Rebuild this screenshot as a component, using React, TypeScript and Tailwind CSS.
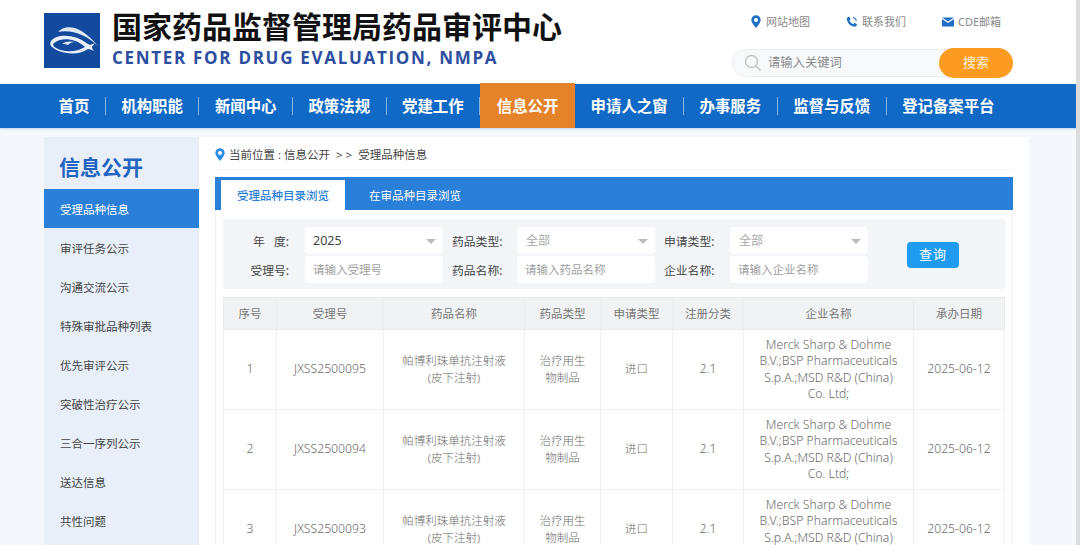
import React from "react";

const cjk = "font-['Noto_Sans','Noto_Sans_CJK_SC',sans-serif]";
const navItems = ["首页", "机构职能", "新闻中心", "政策法规", "党建工作", "信息公开", "申请人之窗", "办事服务", "监督与反馈", "登记备案平台"];
const sideItems = ["受理品种信息", "审评任务公示", "沟通交流公示", "特殊审批品种列表", "优先审评公示", "突破性治疗公示", "三合一序列公示", "送达信息", "共性问题"];
const rows = [
  ["1", "JXSS2500095"],
  ["2", "JXSS2500094"],
  ["3", "JXSS2500093"],
];
const heads = ["序号", "受理号", "药品名称", "药品类型", "申请类型", "注册分类", "企业名称", "承办日期"];
const widths = [53, 107, 141, 76, 72, 71, 170, 91];

function Pin({ className }: { className: string }) {
  return (
    <svg viewBox="0 0 12 15" className={className}>
      <path fillRule="evenodd" d="M6 0a5.6 5.6 0 0 0-5.6 5.6C.4 9.4 6 15 6 15s5.6-5.6 5.6-9.4A5.6 5.6 0 0 0 6 0Zm0 3.2a2.4 2.4 0 1 1 0 4.8 2.4 2.4 0 0 1 0-4.8Z" fill="currentColor" />
    </svg>
  );
}

function Logo() {
  return (
    <svg viewBox="0 0 56 55" className="w-14 h-[55px] shrink-0 bg-[#134a9e]">
      <path d="M14 19C22 10 38 13 54 33 43 22 27 16 14 19Z" fill="#dfe9f6" />
      <path fillRule="evenodd" d="M7 28C13 20 32 21 44 31c2 1.500 5 0 7-1-1 2-3 3-3 4 0 1 1 3 2 4-2-1-4-2-6-2C33 44 13 40 7 33c-1-2-1-3 0-5Zm3 2c-2 2 0 4 2 5 9 5 21 4 29-1C30 24 16 25 10 30Z" fill="#e8eff8" />
      <path d="M18 31c3-3 9-3 13-2-3 0-5 1-7 3-2-1-4-1-6-1Z" fill="#dfe9f6" />
    </svg>
  );
}

function Caret() {
  return <span className="ml-auto mr-[7px] w-0 h-0 border-x-[5px] border-x-transparent border-t-[5px] border-t-[#bbbbbb]" />;
}

function Select({ value, muted }: { value: string; muted?: boolean }) {
  return (
    <div className={`h-[27px] bg-white rounded-sm flex items-center pt-px ${muted ? "pl-[9px] text-[12px] text-[#a8a8a8]" : "pl-2 text-[12.500px] text-[#444]"}`}>
      {value}
      <Caret />
    </div>
  );
}

function Field({ holder }: { holder: string }) {
  return <div className="h-[27px] bg-white rounded-sm flex items-center pl-2 pt-px text-[11.500px] text-[#a0a0a0]">{holder}</div>;
}

function Label({ children, first }: { children: React.ReactNode; first?: boolean }) {
  return (
    <div className={`text-[11.800px] pt-[2px] text-[#444] flex items-center ${first ? "justify-end pr-4" : "pl-[9px]"}`}>{children}</div>
  );
}

const latin = "text-[12.200px]";

export default function App() {
  return (
    <div className={`w-[1080px] h-[545px] overflow-hidden bg-[#f4f8fd] relative ${cjk}`}>
      <header className="h-[84px] bg-white flex pl-11">
        <div className="pt-[13px]">
          <Logo />
        </div>
        <div className="ml-3 pt-[9px] w-[460px]">
          <div className="text-[30px] leading-[36px] font-bold text-[#111] whitespace-nowrap">国家药品监督管理局药品审评中心</div>
          <div className="mt-[3px] text-[17px] leading-[20px] font-bold tracking-[1.700px] text-[#2c4ea0] whitespace-nowrap font-['Open_Sans',sans-serif]">CENTER FOR DRUG EVALUATION, NMPA</div>
        </div>
        <div className="ml-auto mr-[67px] w-[281px] flex flex-col">
          <div className="h-[48px] flex items-start pt-[14px] pl-[19px] text-[11px] leading-[15px] text-[#888]">
            <span className="flex items-center gap-[5px] w-[95px]">
              <Pin className="w-[10px] h-[13px] text-[#1f6fc4]" />
              网站地图
            </span>
            <span className="flex items-center gap-[4px] w-[96px]">
              <svg viewBox="0 0 14 14" className="w-3 h-3">
                <path d="M1 3c0-1 1-2 2.500-2.500L5.500 3.500 4 5c.6 2 2.400 3.800 4.500 4.500l1.500-1.500 3 2c-.5 1.500-1.500 2.500-2.500 2.500C5.500 12.500 1 8 1 3Z" fill="#1f6fc4" />
                <path d="M8 1.500a4.500 4.500 0 0 1 4.500 4.500h-1.200A3.300 3.300 0 0 0 8 2.700Z" fill="#1f6fc4" />
              </svg>
              联系我们
            </span>
            <span className="flex items-center gap-[4px]">
              <svg viewBox="0 0 13 10" className="w-[12px] h-[10px]">
                <path d="M0 0h13L6.500 4.500Z" fill="#1f6fc4" />
                <path d="M0 1.800 6.500 6 13 1.800V10H0Z" fill="#1f6fc4" />
              </svg>
              CDE邮箱
            </span>
          </div>
          <div className="h-[30px] flex items-center">
            <div className="flex-1 h-[28px] -mr-[30px] rounded-l-full bg-[#f8f9fb] border border-[#eceef2] flex items-center pl-[11px] text-[12.300px] text-[#8a8a8a]">
              <svg viewBox="0 0 18 18" className="w-[18px] h-[18px] mr-[6px]" fill="none" stroke="#c4c4c4" strokeWidth="1.500">
                <circle cx="7.500" cy="7.500" r="6" />
                <path d="M12 12l4.500 4.500" />
              </svg>
              请输入关键词
            </div>
            <div className="relative w-[74px] h-[30px] rounded-full bg-[#fb9c20] text-[#fff3dc] text-[13px] flex items-center justify-center">搜索</div>
          </div>
        </div>
      </header>

      <nav className="h-[44px] bg-[#0f69c5] flex items-center pl-[43px] shadow-[0_1px_2px_rgba(15,105,197,0.25)]">
        {navItems.map((n, i) => {
          const active = n === "信息公开";
          return (
            <div key={n} className="relative flex items-center h-full">
              {active ? (
                <div className="h-[45px] -mt-px w-[95px] bg-[#e5832b] flex items-center justify-center pt-[2px] text-white font-bold text-[15.400px]">{n}</div>
              ) : (
                <div className="px-[15.500px] pt-px text-white font-bold text-[15.400px] whitespace-nowrap">{n}</div>
              )}
              {i < navItems.length - 1 && !active && <div className="w-px h-[18px] bg-[#7fb2e6]" />}
            </div>
          );
        })}
      </nav>

      <div className="flex pl-11 pt-[9px]">
        <aside className="w-[155px] shrink-0 bg-[#e9eff8]">
          <div className="h-[52px] pl-[15px] pt-[14px] text-[21px] leading-[32px] font-bold text-[#2264c2]">信息公开</div>
          {sideItems.map((s, i) => (
            <div key={s} className={`h-[39px] pl-4 pt-[2px] flex items-center text-[11.500px] ${i === 0 ? "bg-[#2a7fd8] text-white" : "text-[#444]"}`}>{s}</div>
          ))}
        </aside>

        <main className="w-[830px] shrink-0 bg-white pl-4 pr-4 h-[420px]">
          <div className="h-[33px] flex items-center border-b border-[#f1f3f6] text-[11.500px] text-[#444] pt-[3px]">
            <Pin className="w-[10px] h-[13px] text-[#2a8fe6] mr-1" />
            当前位置 : 信息公开 &nbsp;&gt; &gt;&nbsp; 受理品种信息
          </div>
          <div className="mt-[7px] h-[33px] bg-[#2a7fd8] flex items-end pl-[6px] text-[11.500px]">
            <div className="w-[124px] h-[30px] pt-[2px] bg-white flex items-center justify-center text-[#2a7fd8] font-medium">受理品种目录浏览</div>
            <div className="ml-6 h-[30px] pt-[2px] flex items-center text-white">在审品种目录浏览</div>
          </div>
          <div className="border-x border-[#f0f2f6] px-[7px] pt-[9px]">
            <div className="h-[70px] bg-[#f3f5f9] pt-2 flex">
              <div className="grid grid-cols-[82px_138px_74px_138px_75px_138px] grid-rows-[27px_27px] gap-y-[2px]">
                <Label first>年&nbsp;&nbsp;&nbsp;度:</Label>
                <Select value="2025" />
                <Label>药品类型:</Label>
                <Select value="全部" muted />
                <Label>申请类型:</Label>
                <Select value="全部" muted />
                <Label first>受理号:</Label>
                <Field holder="请输入受理号" />
                <Label>药品名称:</Label>
                <Field holder="请输入药品名称" />
                <Label>企业名称:</Label>
                <Field holder="请输入企业名称" />
              </div>
              <button className="ml-[39px] mt-[15px] w-[52px] h-[26px] rounded-sm bg-[#1f9bf0] text-white text-[13px] tracking-[1px]">查询</button>
            </div>
            <table className="mt-2 table-fixed border-collapse w-[781px] text-[11.500px] text-[#6a6a6a] font-light">
              <colgroup>
                {widths.map((w, i) => (
                  <col key={i} style={{ width: w }} />
                ))}
              </colgroup>
              <thead>
                <tr className="h-8 bg-[#f1f2f4]">
                  {heads.map((h) => (
                    <th key={h} className="border border-[#e9eaec] font-normal text-[#777]">{h}</th>
                  ))}
                </tr>
              </thead>
              <tbody>
                {rows.map(([n, id]) => (
                  <tr key={n} className="h-20 text-center leading-[16.300px]">
                    <td className={`border border-[#f0f0f0] ${latin}`}>{n}</td>
                    <td className={`border border-[#f0f0f0] ${latin}`}>{id}</td>
                    <td className="border border-[#f0f0f0]">帕博利珠单抗注射液<br />(皮下注射)</td>
                    <td className="border border-[#f0f0f0]">治疗用生<br />物制品</td>
                    <td className="border border-[#f0f0f0]">进口</td>
                    <td className={`border border-[#f0f0f0] ${latin}`}>2.1</td>
                    <td className={`border border-[#f0f0f0] ${latin}`}>Merck Sharp &amp; Dohme<br />B.V.;BSP Pharmaceuticals<br />S.p.A.;MSD R&amp;D (China)<br />Co. Ltd;</td>
                    <td className={`border border-[#f0f0f0] ${latin}`}>2025-06-12</td>
                  </tr>
                ))}
              </tbody>
            </table>
          </div>
        </main>
      </div>
      <div className="absolute right-0 top-0 w-1 h-full bg-[#dcdcdc]" />
    </div>
  );
}
